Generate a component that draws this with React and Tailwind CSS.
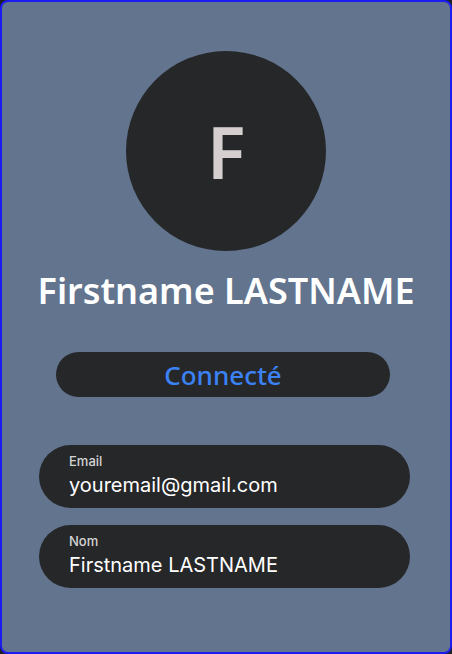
export default function App() {
  const fields = [
    { label: "Email", value: "youremail@gmail.com" },
    { label: "Nom", value: "Firstname LASTNAME" },
  ];

  return (
    <div className="w-[452px] h-[654px] bg-[#1e2024]">
      <div className="h-full flex flex-col border-2 border-[#1c1cf0] rounded-lg bg-slate-500 pt-[49px]">
        {/* Avatar */}
        <div className="self-center w-[200px] h-[200px] rounded-full bg-[#262729] flex items-center justify-center">
          <span
            className="text-[72px] font-semibold text-[#d6cfcf] leading-none"
            style={{ fontFamily: '"Noto Sans", sans-serif' }}
          >
            F
          </span>
        </div>

        <h1
          className="self-center mt-[16px] text-[36px] leading-[48px] font-semibold text-white"
          style={{ fontFamily: '"Noto Sans", sans-serif' }}
        >
          Firstname LASTNAME
        </h1>

        {/* Status */}
        <div className="ml-[54px] mt-[37px] w-[334px] h-[45px] rounded-full bg-[#262729] flex items-center justify-center">
          <span
            className="text-[26px] font-medium text-[#3b82f6] leading-none"
            style={{ fontFamily: '"Noto Sans", sans-serif' }}
          >
            Connecté
          </span>
        </div>

        {/* Fields */}
        <div className="ml-[37px] mt-[48px] flex flex-col gap-[17px]">
          {fields.map((f) => (
            <div
              key={f.label}
              className="w-[371px] h-[63px] rounded-full bg-[#262729] pl-[30px] pt-[8px]"
              style={{ fontFamily: "Inter, sans-serif" }}
            >
              <div className="text-[13px] leading-4 font-medium text-[#d4d4d4]">{f.label}</div>
              <div className="mt-[4px] text-[20px] leading-6 text-white">{f.value}</div>
            </div>
          ))}
        </div>
      </div>
    </div>
  );
}
